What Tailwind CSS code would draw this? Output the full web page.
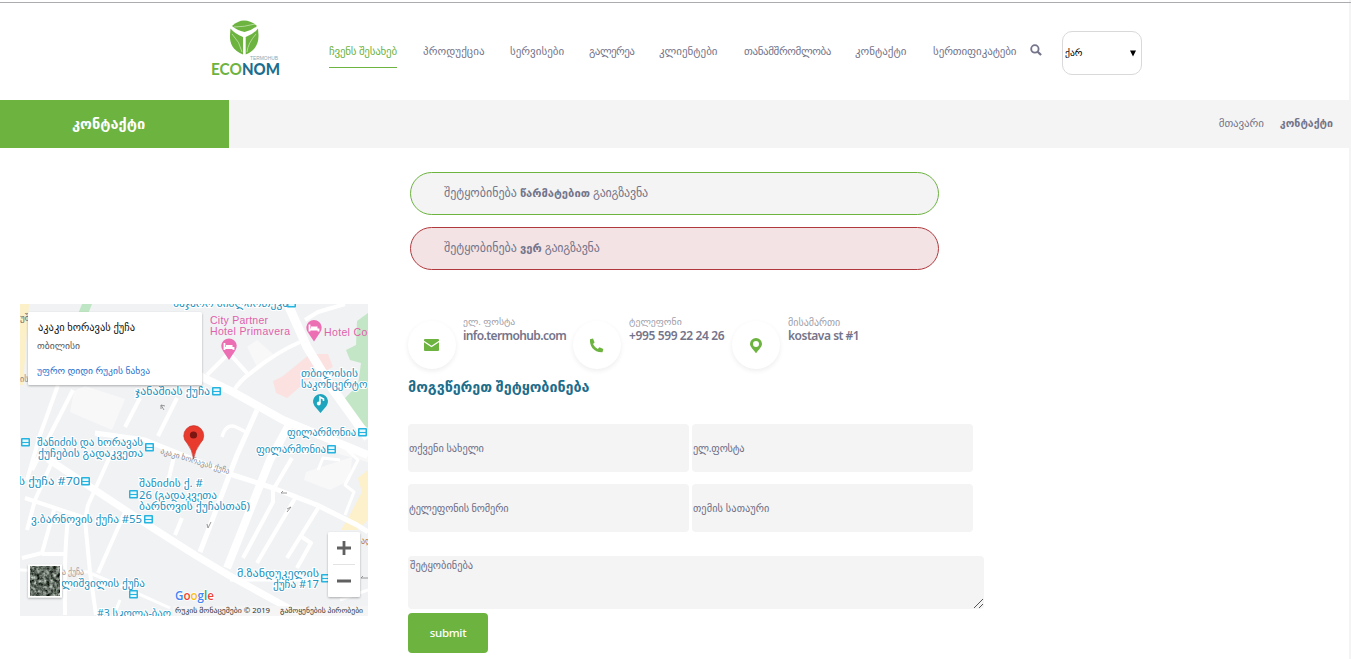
<!DOCTYPE html>
<html lang="ka">
<head>
<meta charset="utf-8">
<title>კონტაქტი</title>
<script src="https://cdn.jsdelivr.net/npm/@tailwindcss/browser@4"></script>
</head>
<body class="h-[659px] w-[1351px] overflow-hidden border-r-2 border-[#f4f4f4] bg-white font-['Noto_Sans','DejaVu_Sans',sans-serif] text-[#74748a]">
<header class="flex h-[100px] whitespace-nowrap border-t border-white pl-[210px]">
  <div class="absolute inset-x-0 top-[2px] h-px bg-[#ababb0]"></div>
  <svg class="mt-[17px] h-[62px] w-[72px]" viewBox="210 18 72 62">
    <path d="M232 26Q238 20.500 244 20.500Q251 20.500 257 26Q251 31 244.500 32Q237 30.500 232 26Z" fill="#6cb33f"/>
    <path d="M230.500 28.500Q235 34 243 37V54.500Q229 49 230 35Z" fill="#6cb33f"/>
    <path d="M258 28.500Q254 34 245.700 37V54.500Q259 49 258.500 35Z" fill="#6cb33f"/>
    <path d="M242 52Q240 42 232 34M247 52Q248 43 256 34M234 27Q244 27 255 24" fill="none" stroke="#c4e3ae" stroke-width=".8"/>
    <text x="250" y="60" font-size="5" textLength="28" lengthAdjust="spacingAndGlyphs" fill="#8ba8b4" font-family="Liberation Sans">TERMOHUB</text>
    <text x="211" y="75" font-size="17" font-weight="bold" textLength="31" lengthAdjust="spacingAndGlyphs" fill="#6cb33f" font-family="Lato">ECO</text>
    <text x="242" y="75" font-size="17" font-weight="900" textLength="38" lengthAdjust="spacingAndGlyphs" fill="#1d6d8e" font-family="Lato">NOM</text>
  </svg>
  <nav class="ml-[47px] flex pt-[41px] text-[11px] leading-[18px]">
    <a class="h-[26px] w-[68px] border-b border-[#6cb33f] tracking-[-0.240px] text-[#6cb33f]">ჩვენს შესახებ</a>
    <a class="ml-[26px] w-[62px] tracking-[0.08px]">პროდუქცია</a>
    <a class="ml-[25px] w-[54px]">სერვისები</a>
    <a class="ml-[25px] w-[45px] tracking-[-0.55px]">გალერეა</a>
    <a class="ml-[25px] w-[59px]">კლიენტები</a>
    <a class="ml-[26px] w-[87px] tracking-[-0.38px]">თანამშრომლობა</a>
    <a class="ml-[24px] w-[52px]">კონტაქტი</a>
    <a class="ml-[26px] w-[84px] tracking-[-0.1px]">სერთიფიკატები</a>
  </nav>
  <svg class="ml-[13px] mt-[43px] size-[12px]" viewBox="0 0 13 13" fill="none" stroke="#74748a"><circle cx="5.300" cy="5.300" r="4" stroke-width="2"/><path d="M8.300 8.300L12 12" stroke-width="2.400"/></svg>
  <div class="ml-[20px] mt-[30px] flex h-[44px] w-[80px] items-center justify-between rounded-[10px] border border-[#d9d9dc] pl-[2px] pr-[5px] text-[9.600px] text-black"><span class="pt-px">ქარ</span><svg class="h-[7px] w-[6px]" viewBox="0 0 6 7"><path d="M0 .5H6L3 6.500Z"/></svg></div>
</header>

<div class="flex h-12 items-center justify-between bg-[#f4f4f4]">
  <h1 class="flex h-12 w-[229px] items-center bg-[#6cb33f] pl-[72px] text-[14.600px] font-bold text-white">კონტაქტი</h1>
  <div class="flex items-center gap-[16px] pb-px pr-[16px] text-[11px]"><span class="tracking-[-0.100px]">მთავარი</span><b class="text-[10.600px]">კონტაქტი</b></div>
</div>

<main>
  <div class="ml-[410px] mt-[24px] flex w-[529px] flex-col gap-[12px] text-[12px]">
    <p class="flex h-[43px] items-center gap-[3px] rounded-full border border-[#6cb33f] bg-[#f4f4f4] pb-px pl-[33px]"><span>შეტყობინება</span><b class="text-[11.200px]">წარმატებით</b><span class="tracking-[-0.220px]">გაიგზავნა</span></p>
    <p class="flex h-[43px] items-center gap-[3px] rounded-full border border-[#b0393d] bg-[#f3e3e4] pb-px pl-[33px]"><span>შეტყობინება</span><b class="text-[11.200px]">ვერ</b><span class="tracking-[-0.220px]">გაიგზავნა</span></p>
  </div>
  <div class="mt-[34px] flex gap-[40px] pl-[20px]">
    <svg class="h-[312px] w-[348px] shrink-0" viewBox="20 304 348 312" font-family="Noto Sans, DejaVu Sans, sans-serif">
      <defs>
        <filter id="sat" x="0" y="0" width="1" height="1" color-interpolation-filters="sRGB"><feTurbulence type="fractalNoise" baseFrequency=".3" numOctaves="3" seed="4"/><feColorMatrix values=".9 .7 0 0 -.42  .9 .7 0 0 -.38  .9 .7 0 0 -.42  0 0 0 0 1"/></filter>
        <filter id="sh" x="-.2" y="-.2" width="1.4" height="1.4"><feDropShadow dx="0" dy="1" stdDeviation="1.300" flood-opacity=".3"/></filter>
        <g id="stop"><rect width="9" height="8.500" rx="1" fill="#25b4e0"/><path d="M1.500 1.500H7.500V4H1.500ZM1.500 5H7.500V7H1.500Z" fill="#e4f7fd"/></g>
        <g id="hotel"><path d="M0 14L-6 5A7.700 7.700 0 1 1 6 5Z" fill="#ec6fb4"/><path d="M-4.500-3V4M4.500 1V4M-4.500 2H4.500M-3 0H3.500" stroke="#fff" stroke-width="1.800"/></g>
      </defs>
      <rect x="20" y="304" width="348" height="312" fill="#f1f2f4"/>
      <path d="M20 304H29L23 385H20Z" fill="#fbf0c8"/>
      <path d="M82 304H92L88 314H78Z" fill="#bfe6c4"/>
      <path d="M368 313L357 321L356 345L346 350L350 360L361 363L358 385L343 400L352 418L368 428Z" fill="#c3e7c6"/>
      <path d="M368 470L358 478L362 492L347 520L341 530L357 530L368 520Z" fill="#fdf1cb"/>
      <path d="M273 381L283 376L310 354L328 354L333 367L308 380L287 398L276 393Z" fill="#fbe2e0"/>
      <path d="M74 391L85 386L125 399L112 430L70 412ZM247 347L257 340L273 354L258 369ZM306 472L352 457L350 480L330 490L304 480ZM330 440L368 452V462L325 450Z" fill="#f8f8f9"/>
      <g fill="none" stroke="#fff" stroke-width="4" stroke-linejoin="round">
        <path d="M200 376L233 392L283 420L368 455" stroke-width="8"/>
        <path d="M286 300L307 347L332 388L368 438" stroke-width="9"/>
        <path d="M290 423L270 460L227 568" stroke-width="8"/>
        <path d="M48 459L98 492L148 525L195 555L230 576L290 609L310 618" stroke-width="7"/>
        <path d="M233 392Q240 380 252 372Q275 353 300 342M207 375L229 353L247 373M305 320L318 312L345 304"/>
        <path d="M257 410L237 455L200 552M95 433L145 440L190 458L233 475L273 488L317 505L357 525L368 532" stroke-width="5"/>
        <path d="M292 458L273 490L273 502L243 558M297 495L257 563M320 505L287 558M302 537L311 543L297 568" stroke-width="4"/>
        <path d="M222 437Q226 423 236 427L246 432" stroke-width="3.500"/>
        <path d="M58 385L40 435L27 480M73 390L32 470M140 398L125 427M177 398L158 436M112 452L88 505L85 520L90 572L96 615M52 462L35 500L27 530M25 498L85 518M54 510L42 553L22 558M42 554H65M68 520Q64 550 65 615M125 512L98 573M175 452L168 482M182 518L175 535"/>
        <path d="M90 572L20 570M90 573L130 590L170 608M120 600L112 620M342 445L358 460L345 485L354 492L345 515M318 470L323 458L340 460M230 580L320 580M340 600L368 590" stroke-width="3"/>
      </g>
      <g fill="none" stroke="#8c8c90" stroke-width=".9"><path d="M164 410L161 405M161 409V405L165 406M287 493H281L283 491M287 512L291 507M287 509L291 507M211 522L208 528L207 524M368 578H361L363 576"/></g>
      <g fill="#2391bd" font-size="10" stroke="#fff" stroke-width="2" paint-order="stroke">
        <text x="173" y="307" textLength="115" lengthAdjust="spacingAndGlyphs">საჯარო ბიბლიოთეკა</text>
        <text x="135" y="395" textLength="75" lengthAdjust="spacingAndGlyphs">ჯანაშიას ქუჩა</text>
        <text x="301" y="377" textLength="57" lengthAdjust="spacingAndGlyphs">თბილისის</text>
        <text x="301" y="388" textLength="78" lengthAdjust="spacingAndGlyphs">საკონცერტო დ</text>
        <text x="287" y="436" textLength="69" lengthAdjust="spacingAndGlyphs">ფილარმონია</text>
        <text x="256" y="453" textLength="70" lengthAdjust="spacingAndGlyphs">ფილარმონია</text>
        <text x="37" y="446" textLength="106" lengthAdjust="spacingAndGlyphs">შანიძის და ხორავას</text>
        <text x="38" y="457" textLength="105" lengthAdjust="spacingAndGlyphs">ქუჩების გადაკვეთა</text>
        <text x="12" y="485" textLength="68" lengthAdjust="spacingAndGlyphs">ის ქუჩა #70</text>
        <text x="139" y="487" textLength="64" lengthAdjust="spacingAndGlyphs">შანიძის ქ. #</text>
        <text x="139" y="499" textLength="78" lengthAdjust="spacingAndGlyphs">26 (გადაკვეთა</text>
        <text x="139" y="510" textLength="111" lengthAdjust="spacingAndGlyphs">ბარნოვის ქუჩასთან)</text>
        <text x="31" y="523" textLength="111" lengthAdjust="spacingAndGlyphs">ვ.ბარნოვის ქუჩა #55</text>
        <text x="61" y="587" textLength="84" lengthAdjust="spacingAndGlyphs">ლიშვილის ქუჩა</text>
        <text x="97" y="617" textLength="74" lengthAdjust="spacingAndGlyphs">#3 სკოლა-ბაღ</text>
        <text x="237" y="577" textLength="82" lengthAdjust="spacingAndGlyphs">მ.ზანდუკელის</text>
        <text x="273" y="588" textLength="46" lengthAdjust="spacingAndGlyphs">ქუჩა #17</text>
      </g>
      <use href="#stop" x="287" y="299"/><use href="#stop" x="212" y="387"/><use href="#stop" x="358" y="428"/><use href="#stop" x="327" y="445"/><use href="#stop" x="21" y="438"/><use href="#stop" x="145" y="443"/><use href="#stop" x="81" y="477"/><use href="#stop" x="129" y="490"/><use href="#stop" x="144" y="515"/><use href="#stop" x="129" y="590"/><use href="#stop" x="321" y="574"/>
      <g fill="#df61aa" font-size="10.500" font-family="Liberation Sans">
        <text x="210" y="324" textLength="58">City Partner</text><text x="210" y="335" textLength="80">Hotel Primavera</text><text x="324" y="336" textLength="46">Hotel Col</text>
      </g>
      <use href="#hotel" x="229" y="346"/><use href="#hotel" x="314" y="327.500"/>
      <path d="M320.500 413L314.500 406A7.500 7.500 0 1 1 326.500 406Z" fill="#1ea5bd"/><path d="M320 403V397L323.500 399V401" fill="none" stroke="#fff" stroke-width="1.500"/><circle cx="318.800" cy="403.500" r="1.900" fill="#fff"/>
      <text transform="translate(160 453) rotate(17)" font-size="8" textLength="72" lengthAdjust="spacingAndGlyphs" fill="#8e8e92">აკაკი ხორავას ქუჩა</text>
      <text x="62" y="575" font-size="8" textLength="22" lengthAdjust="spacingAndGlyphs" fill="#99999c">ა ქუჩა</text>
      <text x="20" y="321" font-size="9" fill="#666">უშ</text><text x="20" y="382" font-size="8" fill="#888">ის</text>
      <text x="361" y="544" font-size="8" fill="#b87430">ალ</text>
      <path d="M193.500 459Q192.500 450 187 443A10 10 0 1 1 200.500 443Q195 450 193.500 459Z" fill="#e83b2e" stroke="#c22a20" stroke-width=".6"/><circle cx="193.500" cy="435" r="3.600" fill="#7c1612"/>
      <g filter="url(#sh)"><rect x="28" y="312" width="174" height="73" rx="1.500" fill="#fff"/></g>
      <text x="38" y="331" font-size="10" textLength="97" lengthAdjust="spacingAndGlyphs" fill="#111">აკაკი ხორავას ქუჩა</text>
      <text x="37" y="349" font-size="9" textLength="43" lengthAdjust="spacingAndGlyphs" fill="#5b5b5b">თბილისი</text>
      <text x="37" y="374" font-size="9" textLength="113" lengthAdjust="spacingAndGlyphs" fill="#2a73ce">უფრო დიდი რუკის ნახვა</text>
      <g filter="url(#sh)"><rect x="28" y="564.500" width="34" height="33" fill="#fff"/><rect x="328" y="532" width="32" height="65" rx="1.500" fill="#fff"/></g>
      <rect x="30" y="566" width="30" height="30" filter="url(#sat)"/>
      <path d="M344 541V555M337 548H351M337 581H351" stroke="#606060" stroke-width="2.800"/><path d="M333 564.500H355" stroke="#e3e3e3"/>
      <g font-family="Open Sans" font-size="13" stroke="#fff" stroke-width="1.500" paint-order="stroke" font-weight="600"><text x="175" y="600" textLength="39" lengthAdjust="spacingAndGlyphs"><tspan fill="#4285f4">G</tspan><tspan fill="#ea4335">o</tspan><tspan fill="#fbbc05">o</tspan><tspan fill="#4285f4">g</tspan><tspan fill="#34a853">l</tspan><tspan fill="#ea4335">e</tspan></text></g>
      <rect x="173" y="606" width="195" height="10" fill="#f5f5f5" opacity=".75"/>
      <g font-size="7.500" fill="#333"><text x="175" y="613" textLength="95" lengthAdjust="spacingAndGlyphs">რუკის მონაცემები © 2019</text><text x="280" y="613" textLength="83" lengthAdjust="spacingAndGlyphs">გამოყენების პირობები</text></g>
    </svg>

    <section class="w-[576px] whitespace-nowrap">
      <div class="flex h-[65px] gap-[7px]">
        <div class="flex gap-[7px]"><span class="mt-[17px] flex size-12 items-center justify-center rounded-full bg-white pr-px shadow-[0_2px_5px_rgba(0,0,0,0.07)]"><svg class="h-[12px] w-[15px]" viewBox="0 0 15 12" fill="#6cb33f"><path d="M0 1Q0 0 1 0H14Q15 0 15 1V1.800L7.500 6.800L0 1.800Z"/><path d="M0 3.200L7.500 8.200L15 3.200V11Q15 12 14 12H1Q0 12 0 11Z"/></svg></span>
          <div class="w-[103px] pt-[11px]"><div class="text-[9.700px] leading-[14px] text-[#a0a0aa]">ელ. ფოსტა</div><div class="text-[12px] font-semibold leading-[13px] tracking-[-0.600px]">info.termohub.com</div></div></div>
        <div class="flex gap-[8px]"><span class="mt-[17px] flex size-12 items-center justify-center rounded-full bg-white pr-px shadow-[0_2px_5px_rgba(0,0,0,0.07)]"><svg class="size-[15px]" viewBox="0 0 15 15" fill="#6cb33f"><path d="M1 1.300L4 .5L5.600 4.500L4 6Q5.500 9.200 8.800 11L10.400 9.300L14.300 11L13.500 14.200Q7 14.500 3.300 10Q.7 6.500 1 1.300Z"/></svg></span>
          <div class="w-[96px] pt-[11px]"><div class="text-[9.800px] leading-[14px] text-[#a0a0aa]">ტელეფონი</div><div class="text-[12px] font-semibold leading-[13px] tracking-[-0.380px]">+995 599 22 24 26</div></div></div>
        <div class="flex gap-[8px]"><span class="mt-[17px] flex size-12 items-center justify-center rounded-full bg-white shadow-[0_2px_5px_rgba(0,0,0,0.07)]"><svg class="h-[15px] w-[12px]" viewBox="0 0 12 15" fill="#6cb33f" fill-rule="evenodd"><path d="M6 15Q5.400 15 4.500 13.300Q0 8.500 0 6A6 6 0 0 1 12 6Q12 8.500 7.500 13.300Q6.600 15 6 15ZM6 3A3 3 0 1 0 6 9A3 3 0 1 0 6 3Z"/></svg></span>
          <div class="pt-[11px]"><div class="text-[10px] leading-[14px] text-[#a0a0aa]">მისამართი</div><div class="text-[12px] font-semibold leading-[13px] tracking-[-0.480px]">kostava st #1</div></div></div>
      </div>
      <h2 class="mt-[7px] text-[14.300px] font-bold leading-[22px] text-[#1c6d8b]">მოგვწერეთ შეტყობინება</h2>
      <div class="mt-[26px] grid grid-cols-[281px_281px] gap-x-[3px] gap-y-[12px] text-[10.300px] text-[#6c6c84]">
        <div class="flex h-12 items-center rounded bg-[#f4f4f4] pl-px pt-[2px]">თქვენი სახელი</div><div class="flex h-12 items-center rounded bg-[#f4f4f4] pl-px pt-[2px] tracking-[-0.2px]">ელ.ფოსტა</div>
        <div class="flex h-12 items-center rounded bg-[#f4f4f4] pl-px pt-[2px] tracking-[-0.1px]">ტელეფონის ნომერი</div><div class="flex h-12 items-center rounded bg-[#f4f4f4] pl-px pt-[2px] tracking-[0.1px]">თემის სათაური</div>
      </div>
      <div class="mt-[24px] flex h-[53px] justify-between rounded bg-[#f4f4f4] pl-[2px] pt-[2px] text-[10.400px] leading-[15px] text-[#6c6c84]">შეტყობინება<svg class="mb-px mr-px size-[9px] self-end" viewBox="0 0 9 9" stroke="#555"><path d="M0 9L9 0M5 9L9 5"/></svg></div>
      <button class="mt-[4px] block h-10 w-20 rounded bg-[#6cb33f] pb-px text-[11.500px] font-medium tracking-[-0.300px] text-white">submit</button>
    </section>
  </div>
</main>
</body>
</html>
